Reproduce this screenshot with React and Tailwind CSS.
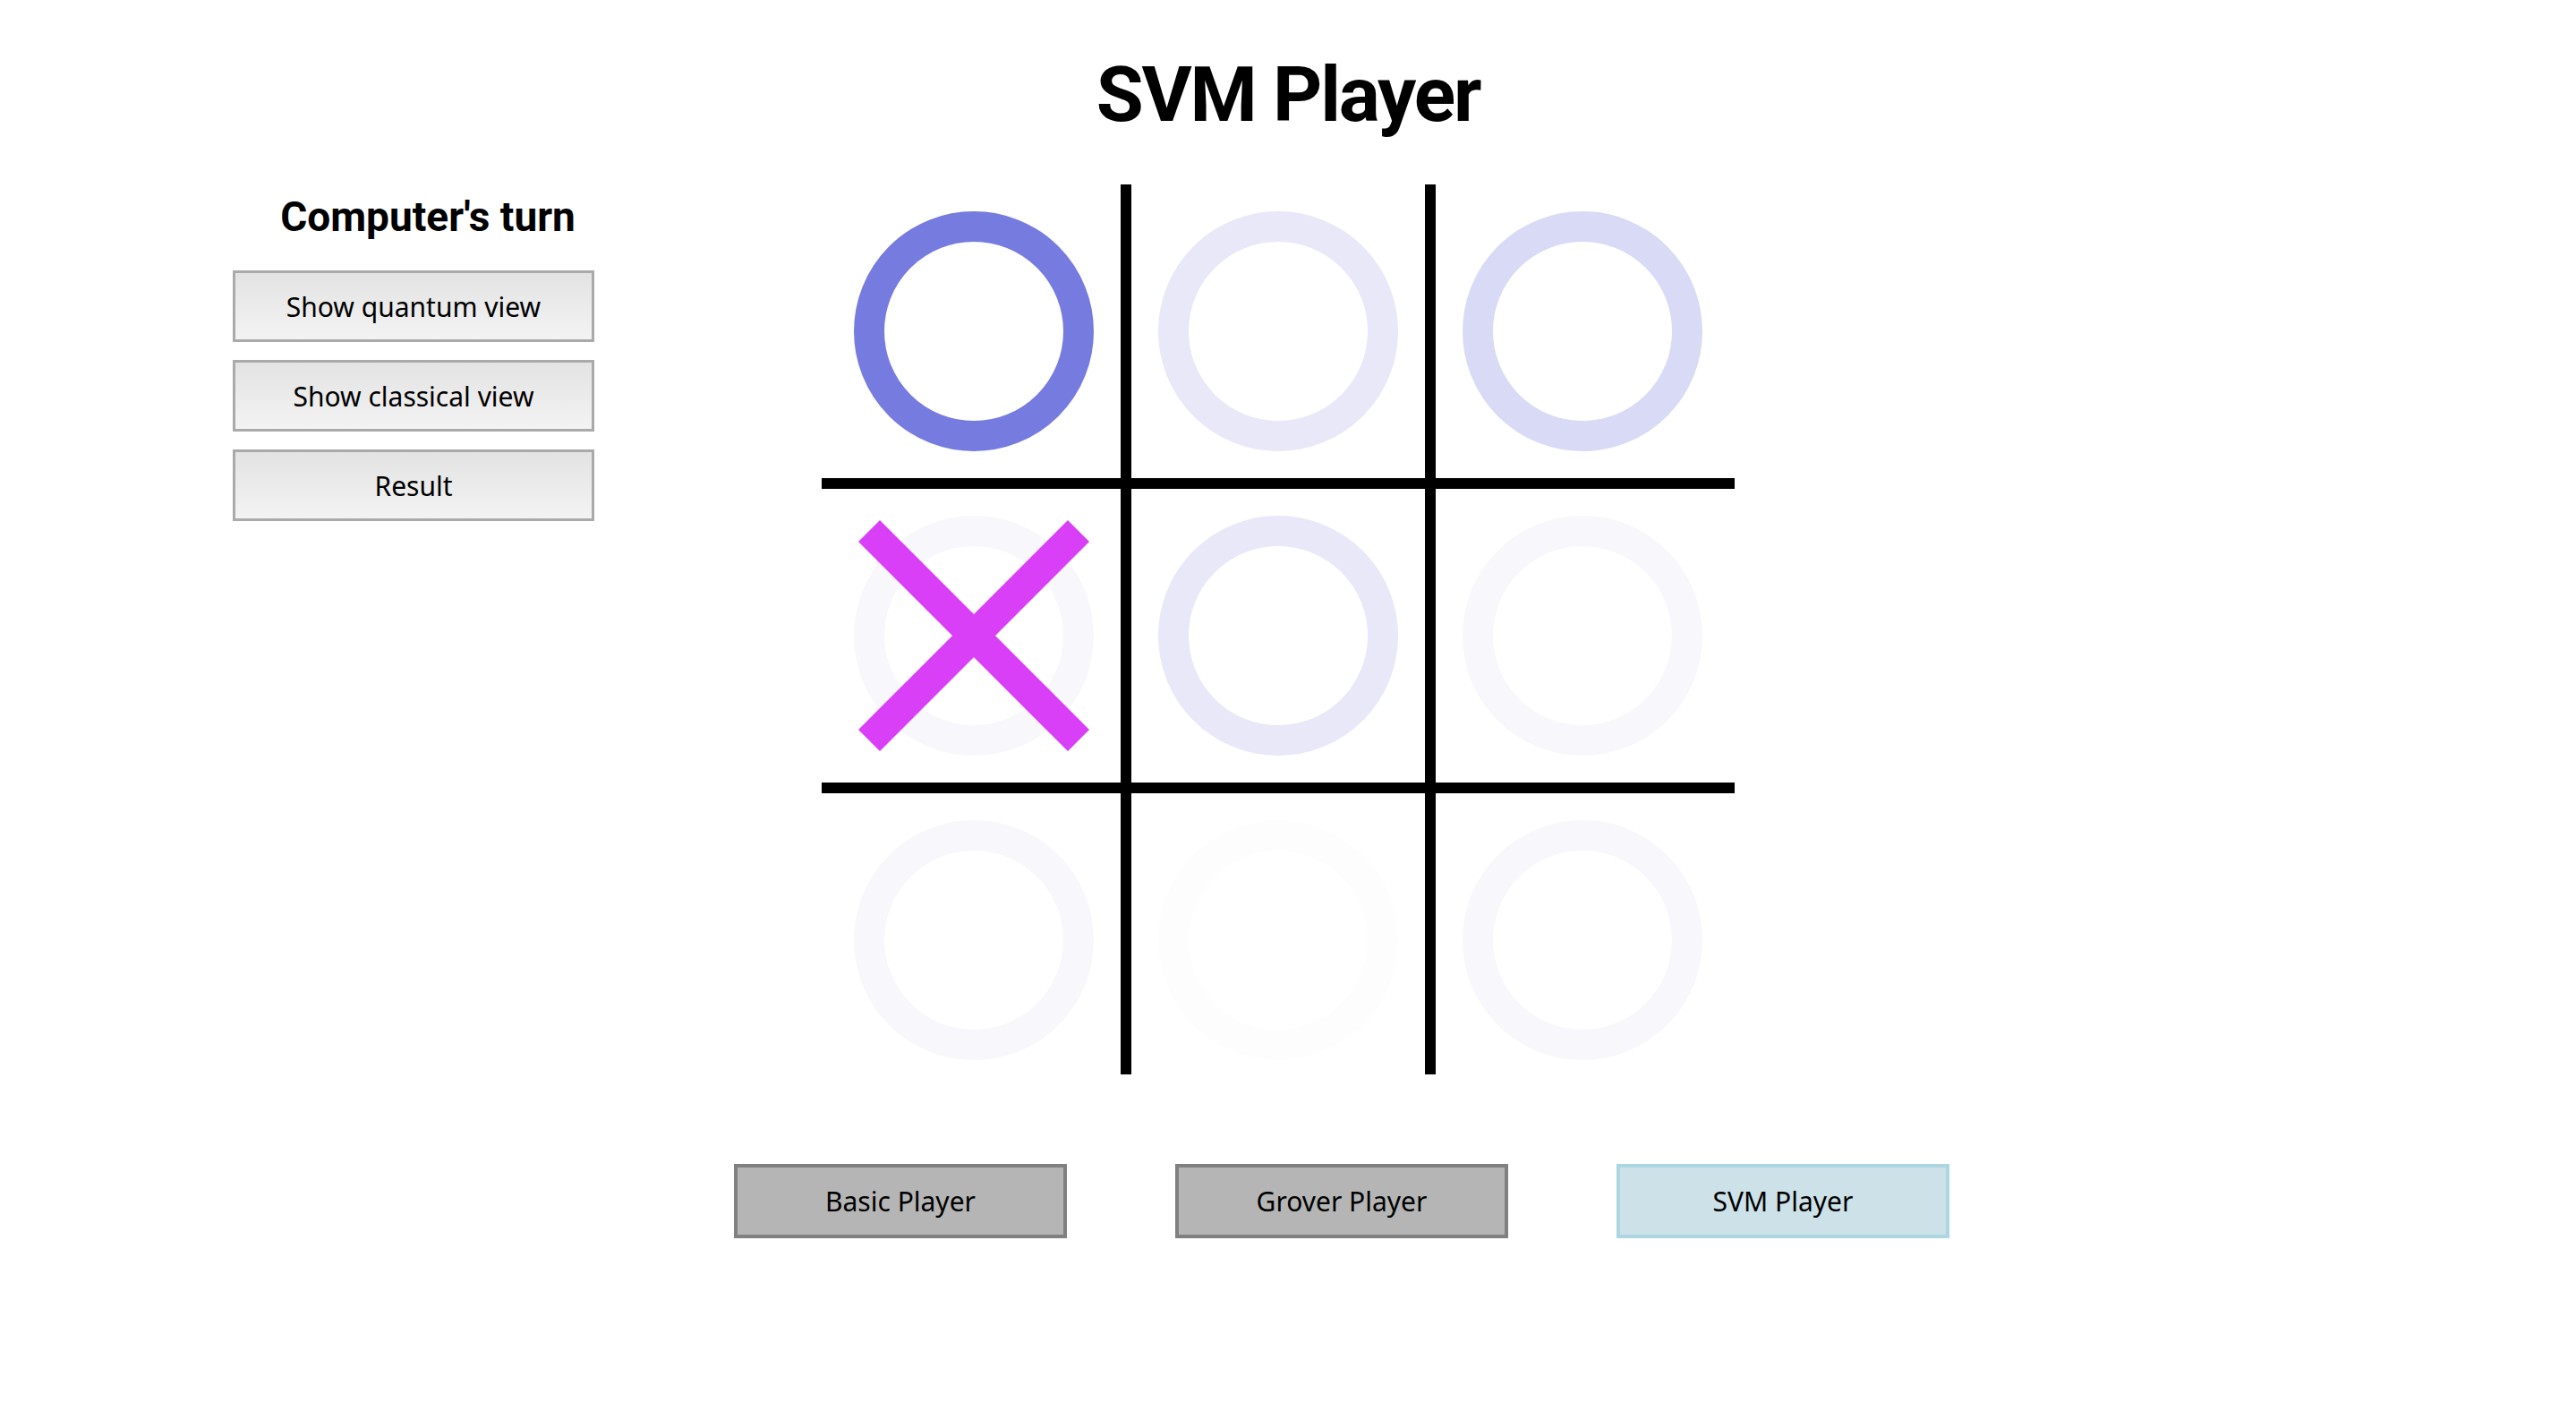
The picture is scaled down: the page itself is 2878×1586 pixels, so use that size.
import React from 'react'

// each cell: mark type and ring colour
const cells = [
  { mark: 'o', color: '#767be0' },
  { mark: 'o', color: '#e8e8f8' },
  { mark: 'o', color: '#d9daf5' },
  { mark: 'x', color: '#f7f7fc' },
  { mark: 'o', color: '#e8e8f8' },
  { mark: 'o', color: '#f7f7fc' },
  { mark: 'o', color: '#f7f7fc' },
  { mark: 'o', color: '#fdfdfe' },
  { mark: 'o', color: '#f7f7fc' },
]

const Board = () => {
  return (
    <svg width="1020" height="1020" viewBox="0 0 1020 1020" className="block shrink-0">
      {cells.map((cell, i) => {
        const cx = (i % 3) * 340 + 170
        const cy = Math.floor(i / 3) * 340 + 170
        return (
          <g key={i}>
            <circle cx={cx} cy={cy} r="117" fill="none" stroke={cell.color} strokeWidth="34" />
            {cell.mark === 'x' && (
              <g stroke="#d93ff6" strokeWidth="34" strokeLinecap="butt">
                <line x1={cx - 117} y1={cy - 117} x2={cx + 117} y2={cy + 117} />
                <line x1={cx + 117} y1={cy - 117} x2={cx - 117} y2={cy + 117} />
              </g>
            )}
          </g>
        )
      })}
      <g fill="#000">
        <rect x="334" y="6" width="12" height="994" />
        <rect x="674" y="6" width="12" height="994" />
        <rect x="0" y="334" width="1020" height="12" />
        <rect x="0" y="674" width="1020" height="12" />
      </g>
    </svg>
  )
}

const SideButton = ({ label }) => (
  <button className="w-[404px] h-[80px] border-[3px] border-[#aaaaaa] bg-gradient-to-b from-[#e3e3e3] to-[#f3f3f3] font-['Noto_Sans',sans-serif] text-[30px] text-black">
    {label}
  </button>
)

const PlayerButton = ({ label, active }) => (
  <button
    className={
      active
        ? "w-[372px] h-[83px] border-[4px] border-[#acd6e2] bg-[#cde1e8] font-['Noto_Sans',sans-serif] text-[30px] text-black"
        : "w-[372px] h-[83px] border-[4px] border-[#808080] bg-[#b5b5b5] font-['Noto_Sans',sans-serif] text-[30px] text-black"
    }
  >
    {label}
  </button>
)

export default function App() {
  return (
    <div className="min-h-screen w-full bg-white text-black font-['Roboto','Noto_Sans',sans-serif]">
      <h1 className="pt-[51px] text-center text-[86px] leading-[110px] font-bold tracking-[-0.025em]">
        SVM Player
      </h1>

      <div className="flex items-start mt-[39px] pl-[260px]">
        <div className="w-[404px] flex flex-col gap-[20px]">
          <h2 className="w-[436px] text-center text-[46px] leading-[56px] font-bold mt-[14px] mb-[12px]">
            Computer's turn
          </h2>
          <SideButton label="Show quantum view" />
          <SideButton label="Show classical view" />
          <SideButton label="Result" />
        </div>
        <div className="ml-[254px]">
          <Board />
        </div>
      </div>

      <div className="flex gap-[121px] pl-[820px] mt-[80px]">
        <PlayerButton label="Basic Player" />
        <PlayerButton label="Grover Player" />
        <PlayerButton label="SVM Player" active />
      </div>
    </div>
  )
}
